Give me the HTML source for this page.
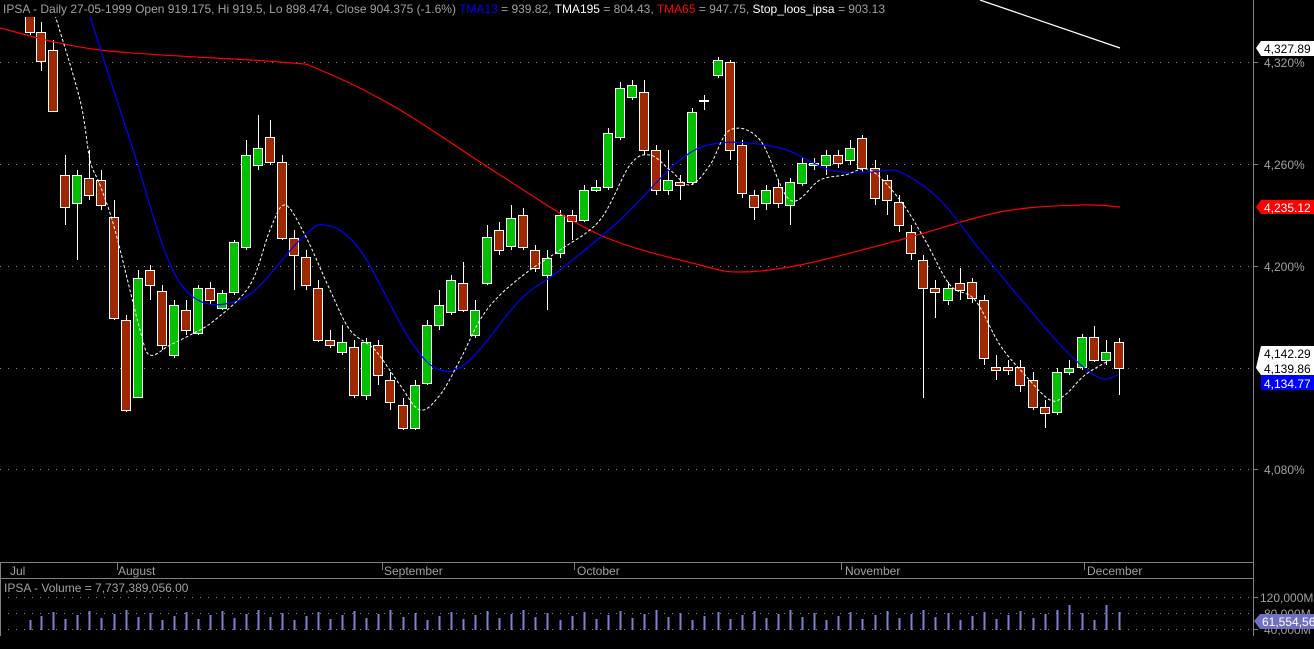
<!DOCTYPE html>
<html><head><meta charset="utf-8"><style>
html,body{margin:0;padding:0;background:#000;width:1314px;height:649px;overflow:hidden}
svg{display:block}
text{font-family:"Liberation Sans",Arial,sans-serif;font-size:12px}
</style></head><body>
<svg id="s" width="1314" height="649" xmlns="http://www.w3.org/2000/svg">
<rect width="1314" height="649" fill="#000"/>
<g stroke="#888" stroke-dasharray="1,7" stroke-width="1">
<line x1="0" y1="62.5" x2="1253" y2="62.5"/><line x1="0" y1="164.5" x2="1253" y2="164.5"/>
<line x1="0" y1="266.5" x2="1253" y2="266.5"/><line x1="0" y1="368.5" x2="1253" y2="368.5"/>
<line x1="0" y1="469.5" x2="1253" y2="469.5"/>
<line x1="0" y1="597.5" x2="1253" y2="597.5"/><line x1="0" y1="613.5" x2="1253" y2="613.5"/><line x1="0" y1="629.5" x2="1253" y2="629.5"/>
</g>
<g stroke="#808080" fill="none">
<line x1="1253.5" y1="0" x2="1253.5" y2="636"/>
<line x1="0" y1="562.5" x2="1253" y2="562.5"/>
<line x1="0" y1="578.5" x2="1253" y2="578.5"/>
<line x1="0.5" y1="562" x2="0.5" y2="636"/>
<line x1="1253" y1="62.5" x2="1258" y2="62.5"/><line x1="1253" y1="164.5" x2="1258" y2="164.5"/>
<line x1="1253" y1="266.5" x2="1258" y2="266.5"/><line x1="1253" y1="469.5" x2="1258" y2="469.5"/>
<line x1="1253" y1="597.5" x2="1258" y2="597.5"/><line x1="1253" y1="629.5" x2="1258" y2="629.5"/>
<line x1="117.5" y1="563" x2="117.5" y2="570"/><line x1="382.5" y1="563" x2="382.5" y2="570"/>
<line x1="574.5" y1="563" x2="574.5" y2="570"/><line x1="841.5" y1="563" x2="841.5" y2="570"/>
<line x1="1084.5" y1="563" x2="1084.5" y2="570"/>
</g>
<g id="c"></g>
<path class="sm" fill="none" stroke="#f00" stroke-width="1.2" data-p="0,28 100,50 280,62 320,70 400,110 500,175 600,235 700,265 740,272 800,265 900,240 1000,212 1080,205 1120,207"/>
<path class="sm" fill="none" stroke="#00f" stroke-width="1.2" data-p="88,10 130,140 180,283 240,300 300,240 325,225 360,250 410,340 440,370 470,360 520,300 560,270 620,220 680,160 720,143 780,148 830,170 870,172 900,172 940,200 980,250 1030,310 1070,355 1100,378 1118,375"/>
<polyline fill="none" stroke="#fff" stroke-width="1.2" points="980,0 1120,48"/>
<path class="sm" fill="none" stroke="#fff" stroke-width="1" stroke-dasharray="3,2" data-p="55,15 80,100 90,160 100,185 115,230 140,330 150,355 170,345 190,335 215,320 250,285 270,230 285,205 305,235 330,290 350,330 375,350 400,385 420,410 440,395 460,360 480,320 500,295 530,270 560,250 600,220 630,165 650,155 670,170 690,185 710,165 730,130 760,140 790,200 820,180 845,175 870,170 900,200 925,240 950,285 975,300 1000,345 1025,375 1050,400 1065,395 1085,375 1110,360"/>
<rect x="0" y="0" width="900" height="17" fill="#000"/>
<text x="3" y="13" fill="#a0a0a0">IPSA - Daily 27-05-1999 Open 919.175, Hi 919.5, Lo 898.474, Close 904.375 (-1.6%) <tspan fill="#0000ff">TMA13</tspan> = 939.82, <tspan fill="#fff">TMA195</tspan> = 804.43, <tspan fill="#f00">TMA65</tspan> = 947.75, <tspan fill="#fff">Stop_loos_ipsa</tspan> = 903.13</text>
<g fill="#a0a0a0">
<text x="1264" y="67">4,320%</text><text x="1264" y="169">4,260%</text>
<text x="1264" y="271">4,200%</text><text x="1264" y="474">4,080%</text>
<text x="1260" y="602">120,000M</text><text x="1264" y="618">80,000M</text><text x="1264" y="634">40,000M</text>
<text x="10" y="575">Jul</text><text x="118" y="575">August</text><text x="384" y="575">September</text>
<text x="577" y="575">October</text><text x="845" y="575">November</text><text x="1087" y="575">December</text>
<text x="4" y="592">IPSA - Volume = 7,737,389,056.00</text>
</g>
<path d="M1256,48 L1261,41 H1314 V56 H1261 Z" fill="#fff"/><text x="1264" y="53" fill="#000">4,327.89</text>
<path d="M1256,207 L1261,200 H1314 V214 H1261 Z" fill="#f00"/><text x="1264" y="212" fill="#fff">4,235.12</text>
<path d="M1261,346 H1314 V375 H1261 L1256,368 Z" fill="#fff"/><text x="1264" y="358" fill="#000">4,142.29</text><text x="1264" y="373" fill="#000">4,139.86</text>
<rect x="1261" y="375" width="53" height="15" fill="#0000ff"/><text x="1264" y="388" fill="#fff">4,134.77</text>
<path d="M1254,621 L1260,614 H1314 V629 H1260 Z" fill="#7070c0"/><text x="1262" y="626" fill="#fff">61,554,56</text>
</svg>
<script>
var C=[[30,0,32,0,35,0],[41,32,61,22,71,0],[53,50,111,40,111,0],[65,175,207,155,225,0],[77,203,175,170,260,1],[89,178,195,150,200,0],[101,180,205,170,210,0],[114,217,318,200,320,0],[126,320,410,315,412,0],[138,397,278,270,398,1],[150,270,285,265,300,0],[162,291,345,285,350,0],[174,355,305,300,358,1],[186,310,330,300,335,0],[198,333,288,285,335,1],[210,288,300,282,305,0],[222,308,293,290,310,1],[234,292,242,240,295,1],[246,247,155,140,250,1],[258,165,148,115,170,1],[270,137,162,120,165,0],[282,162,238,155,240,0],[294,238,255,230,290,0],[306,257,285,250,290,0],[318,288,340,280,342,0],[330,340,345,330,348,0],[342,352,342,325,355,1],[354,347,395,340,398,0],[366,395,342,338,400,1],[378,345,375,340,385,0],[390,380,402,372,410,0],[403,405,428,398,430,0],[415,428,385,380,430,1],[427,383,325,320,385,1],[439,325,305,290,330,1],[451,312,280,275,315,1],[463,283,310,262,312,0],[475,335,310,300,338,1],[487,283,237,225,285,1],[499,230,250,222,255,0],[511,246,218,205,250,1],[523,215,247,208,250,0],[535,250,268,245,272,0],[547,275,258,250,310,1],[560,253,215,210,258,1],[572,215,221,210,240,0],[584,220,190,185,222,1],[596,190,187,180,192,1],[608,187,133,128,190,1],[620,137,88,82,140,1],[632,97,85,80,100,1],[644,92,150,80,155,0],[656,150,190,145,195,0],[668,190,180,150,195,1],[680,182,185,175,200,0],[692,182,112,108,185,1],[704,100,101,95,110,1],[718,75,60,57,78,1],[730,62,150,60,160,0],[742,145,193,140,198,0],[754,195,207,190,220,0],[766,203,190,185,210,1],[778,187,203,180,208,0],[790,205,182,178,225,1],[802,183,163,158,186,1],[814,165,163,158,170,1],[826,165,155,150,175,1],[838,155,163,150,168,0],[850,160,148,140,165,1],[862,138,168,135,172,0],[875,168,198,160,205,0],[887,180,200,175,215,0],[899,202,225,195,232,0],[911,232,253,225,260,0],[923,260,288,255,398,0],[935,288,292,280,318,0],[948,300,288,282,305,1],[960,283,290,268,300,0],[972,282,298,278,303,0],[984,300,358,295,365,0],[996,367,370,355,380,0],[1008,367,370,360,375,0],[1020,367,385,360,392,0],[1033,380,407,372,410,0],[1045,407,413,400,428,0],[1057,412,372,368,415,1],[1069,372,368,360,375,1],[1082,367,337,334,370,1],[1094,337,360,326,362,0],[1106,360,352,340,365,1],[1119,342,368,338,395,0]];
var h='';
C.forEach(function(c,i){var x=c[0],t=Math.min(c[1],c[2]),b=Math.max(c[1],c[2]);
h+='<line x1="'+(x+.5)+'" y1="'+c[3]+'" x2="'+(x+.5)+'" y2="'+c[4]+'" stroke="#fff"/>';
h+='<rect x="'+(x-4.5)+'" y="'+(t+.5)+'" width="9" height="'+Math.max(1,b-t)+'" fill="'+(c[5]?'#00c000':'#a02800')+'" stroke="#fff"/>';
var vh=10+((i*37)%11); if(i==86||i==89)vh=25;
h+='<line x1="'+(x+.5)+'" y1="'+(630-vh)+'" x2="'+(x+.5)+'" y2="630" stroke="#8080d0" stroke-width="2"/>';});
document.getElementById('c').innerHTML=h;
document.querySelectorAll('.sm').forEach(function(el){
var p=el.getAttribute('data-p').split(' ').map(function(s){return s.split(',').map(Number)});
var d='M'+p[0][0]+','+p[0][1];
for(var i=0;i<p.length-1;i++){var p0=p[i-1]||p[i],p1=p[i],p2=p[i+1],p3=p[i+2]||p2;
d+=' C'+(p1[0]+(p2[0]-p0[0])/6)+','+(p1[1]+(p2[1]-p0[1])/6)+' '+(p2[0]-(p3[0]-p1[0])/6)+','+(p2[1]-(p3[1]-p1[1])/6)+' '+p2[0]+','+p2[1];}
el.setAttribute('d',d);});
</script>
</body></html>
